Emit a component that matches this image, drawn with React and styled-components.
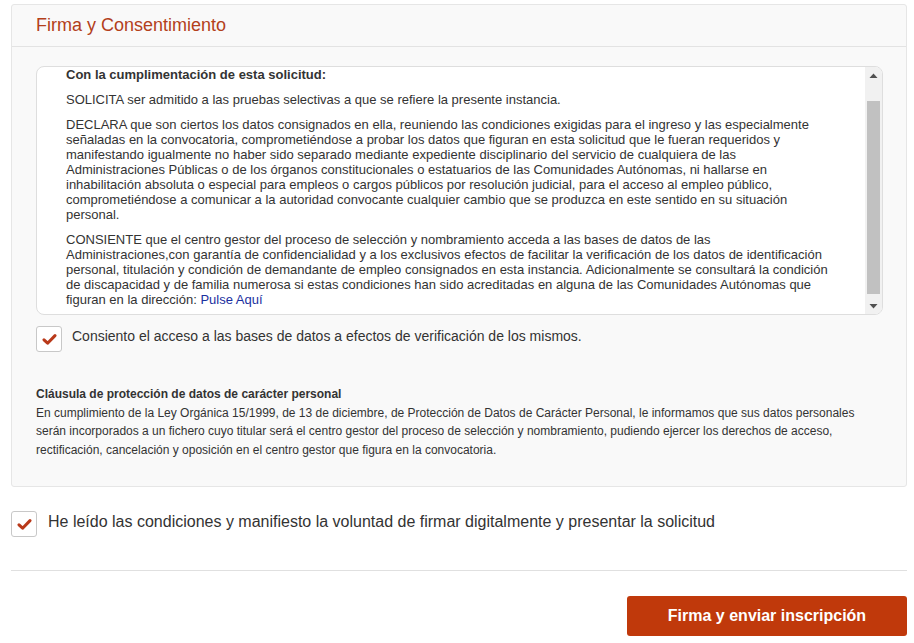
import React from "react";
import styled, { createGlobalStyle } from "styled-components";

const GlobalStyle = createGlobalStyle`
  html, body { margin: 0; padding: 0; background: #fff; }
  body { font-family: "Liberation Sans", Arial, sans-serif; color: #333; }
  * { box-sizing: border-box; }
`;

const Page = styled.div`
  padding: 4px 7px 0 11px;
  width: 914px;
`;

const Panel = styled.section`
  background: #f9f9f9;
  border: 1px solid #e6e6e6;
  border-radius: 3px;
`;

const PanelHeader = styled.header`
  height: 42px;
  display: flex;
  align-items: center;
  padding: 0 24px;
  border-bottom: 1px solid #e3e3e3;
`;

const Title = styled.h2`
  margin: 0;
  font-size: 18px;
  font-weight: 400;
  color: #b3401b;
`;

const PanelBody = styled.div`
  padding: 19px 23px 27px 24px;
`;

const ScrollBox = styled.div`
  height: 249px;
  background: #fff;
  border: 1px solid #dedede;
  border-radius: 8px;
  display: flex;
  overflow: hidden;
`;

const ScrollContent = styled.div`
  flex: 1;
  overflow: hidden;
  padding: 0 30px 0 29px;
  font-size: 13px;
  line-height: 15px;
`;

const ScrollBar = styled.div`
  flex: none;
  width: 17px;
  background: #f1f1f1;
  display: flex;
  flex-direction: column;
`;

const ScrollArrow = styled.div`
  height: 17px;
  display: flex;
  align-items: center;
  justify-content: center;
`;

const ScrollTrack = styled.div`
  flex: 1;
  padding: 0 2px;
`;

const ScrollThumb = styled.div`
  background: #c1c1c1;
  height: 193px;
`;

const Para = styled.p`
  margin: 0 0 10px;
  font-weight: ${(p) => (p.$bold ? 700 : 400)};
  &:last-child { margin-bottom: 0; }
`;

const Link = styled.a`
  color: #1a2fa0;
  text-decoration: none;
`;

const CheckRow = styled.label`
  display: flex;
  align-items: flex-start;
  gap: ${(p) => p.$gap || 10}px;
  margin-top: ${(p) => p.$mt || 0}px;
  font-size: ${(p) => p.$size || 14}px;
  line-height: ${(p) => p.$lh || 20}px;
  color: #333;
  cursor: pointer;
`;

const Box = styled.span`
  flex: none;
  width: 26px;
  height: 26px;
  border: 1px solid #c8c8c8;
  border-radius: 3px;
  background: #fff;
  display: flex;
  align-items: center;
  justify-content: center;
`;

const Clause = styled.div`
  margin-top: 33px;
  font-size: 12px;
  line-height: 18.5px;
`;

const ClauseTitle = styled.div`
  font-weight: 700;
`;

const Divider = styled.hr`
  border: 0;
  border-top: 1px solid #e0e0e0;
  margin: 33px 0 0;
`;

const Footer = styled.div`
  display: flex;
  justify-content: flex-end;
  padding-top: 25px;
`;

const SubmitButton = styled.button`
  width: 280px;
  height: 40px;
  border: 0;
  border-radius: 3px;
  background: #c0390b;
  color: #fff;
  font-family: "Liberation Sans", Arial, sans-serif;
  font-size: 16px;
  font-weight: 700;
  cursor: pointer;
`;

const Check = () => (
  <svg width="15" height="13" viewBox="0 0 15 13">
    <path d="M2 6.8 L5.6 10.2 L13 2.6" fill="none" stroke="#b9391a" strokeWidth="3" strokeLinejoin="round" strokeLinecap="round" />
  </svg>
);

const Arrow = ({ down }) => (
  <svg width="9" height="6" viewBox="0 0 9 6">
    <path d={down ? "M0.5 1 L8.5 1 L4.5 5.5 Z" : "M0.5 5 L8.5 5 L4.5 0.5 Z"} fill="#505050" />
  </svg>
);

const thumbOffset = 17;

export default function App() {
  return (
    <>
      <GlobalStyle />
      <Page>
        <Panel>
          <PanelHeader>
            <Title>Firma y Consentimiento</Title>
          </PanelHeader>
          <PanelBody>
            <ScrollBox>
              <ScrollContent>
                <Para $bold>Con la cumplimentación de esta solicitud:</Para>
                <Para>SOLICITA ser admitido a las pruebas selectivas a que se refiere la presente instancia.</Para>
                <Para>
                  DECLARA que son ciertos los datos consignados en ella, reuniendo las condiciones exigidas para el ingreso y las especialmente señaladas en la convocatoria, comprometiéndose a probar los datos que figuran en esta solicitud que le fueran requeridos y manifestando igualmente no haber sido separado mediante expediente disciplinario del servicio de cualquiera de las Administraciones Públicas o de los órganos constitucionales o estatuarios de las Comunidades Autónomas, ni hallarse en inhabilitación absoluta o especial para empleos o cargos públicos por resolución judicial, para el acceso al empleo público, comprometiéndose a comunicar a la autoridad convocante cualquier cambio que se produzca en este sentido en su situación personal.
                </Para>
                <Para>
                  CONSIENTE que el centro gestor del proceso de selección y nombramiento acceda a las bases de datos de las Administraciones,con garantía de confidencialidad y a los exclusivos efectos de facilitar la verificación de los datos de identificación personal, titulación y condición de demandante de empleo consignados en esta instancia. Adicionalmente se consultará la condición de discapacidad y de familia numerosa si estas condiciones han sido acreditadas en alguna de las Comunidades Autónomas que figuran en la dirección: <Link href="#">Pulse Aquí</Link>
                </Para>
              </ScrollContent>
              <ScrollBar>
                <ScrollArrow><Arrow /></ScrollArrow>
                <ScrollTrack>
                  <ScrollThumb style={{ marginTop: thumbOffset }} />
                </ScrollTrack>
                <ScrollArrow><Arrow down /></ScrollArrow>
              </ScrollBar>
            </ScrollBox>
            <CheckRow $mt={11}>
              <Box><Check /></Box>
              <span>Consiento el acceso a las bases de datos a efectos de verificación de los mismos.</span>
            </CheckRow>
            <Clause>
              <ClauseTitle>Cláusula de protección de datos de carácter personal</ClauseTitle>
              En cumplimiento de la Ley Orgánica 15/1999, de 13 de diciembre, de Protección de Datos de Carácter Personal, le informamos que sus datos personales serán incorporados a un fichero cuyo titular será el centro gestor del proceso de selección y nombramiento, pudiendo ejercer los derechos de acceso, rectificación, cancelación y oposición en el centro gestor que figura en la convocatoria.
            </Clause>
          </PanelBody>
        </Panel>
        <CheckRow $mt={24} $size={16} $lh={22} $gap={11}>
          <Box><Check /></Box>
          <span>He leído las condiciones y manifiesto la voluntad de firmar digitalmente y presentar la solicitud</span>
        </CheckRow>
        <Divider />
        <Footer>
          <SubmitButton>Firma y enviar inscripción</SubmitButton>
        </Footer>
      </Page>
    </>
  );
}
